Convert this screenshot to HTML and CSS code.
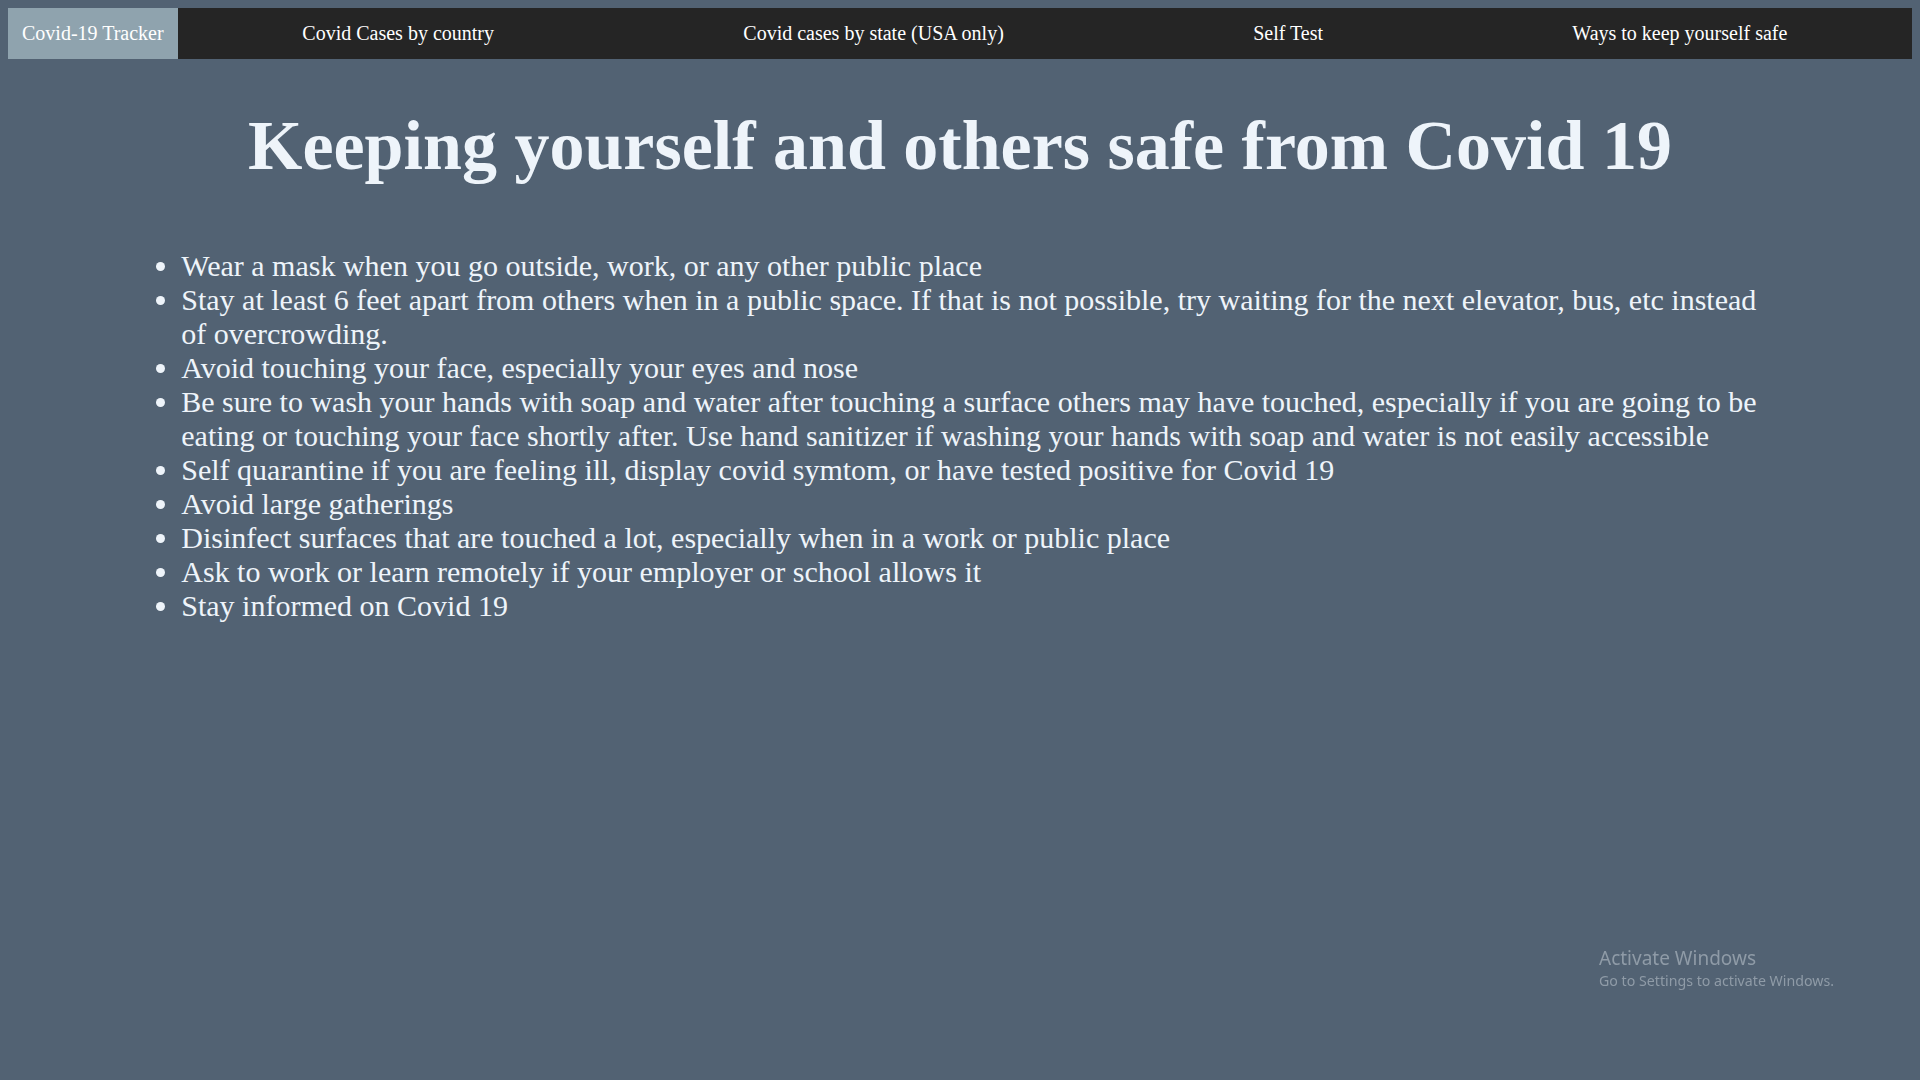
FILE: index.html
```html
<!DOCTYPE html>
<html lang="en">
<head>
<meta charset="utf-8">
<title>Ways to keep yourself safe</title>
<link rel="stylesheet" href="styles.css">
</head>
<body>
<nav class="topnav">
  <a class="brand" href="#">Covid-19 Tracker</a>
  <ul class="nav-links">
    <li><a href="#">Covid Cases by country</a></li>
    <li><a href="#">Covid cases by state (USA only)</a></li>
    <li><a href="#">Self Test</a></li>
    <li><a href="#">Ways to keep yourself safe</a></li>
  </ul>
</nav>
<h1 class="title">Keeping yourself and others safe from Covid 19</h1>
<ul class="tips">
  <li>Wear a mask when you go outside, work, or any other public place</li>
  <li>Stay at least 6 feet apart from others when in a public space. If that is not possible, try waiting for the next elevator, bus, etc instead of overcrowding.</li>
  <li>Avoid touching your face, especially your eyes and nose</li>
  <li>Be sure to wash your hands with soap and water after touching a surface others may have touched, especially if you are going to be eating or touching your face shortly after. Use hand sanitizer if washing your hands with soap and water is not easily accessible</li>
  <li>Self quarantine if you are feeling ill, display covid symtom, or have tested positive for Covid 19</li>
  <li>Avoid large gatherings</li>
  <li>Disinfect surfaces that are touched a lot, especially when in a work or public place</li>
  <li>Ask to work or learn remotely if your employer or school allows it</li>
  <li>Stay informed on Covid 19</li>
</ul>
<div class="watermark">
  <div class="wm-title">Activate Windows</div>
  <div class="wm-sub">Go to Settings to activate Windows.</div>
</div>
</body>
</html>
```
FILE: styles.css
```css
html {
  background: #526273;
}
body {
  margin: 8px;
  background: #526273;
  font-family: "Liberation Serif", "Times New Roman", serif;
  color: #eef4fa;
  min-height: 1064px;
}
.topnav {
  display: flex;
  align-items: stretch;
  background: #252525;
  height: 51px;
}
.brand {
  display: flex;
  align-items: center;
  padding: 0 14px;
  background: #8fa3ae;
  color: #ffffff;
  font-size: 20px;
  text-decoration: none;
}
.nav-links {
  flex: 1;
  display: flex;
  justify-content: space-around;
  align-items: center;
  list-style: none;
  margin: 0;
  padding: 0;
}
.nav-links a {
  color: #ffffff;
  font-size: 20px;
  text-decoration: none;
}
.title {
  font-size: 70px;
  font-weight: bold;
  text-align: center;
  margin: 47px 0 63px;
  color: #eef4fa;
}
.tips {
  margin: 0 7%;
  padding-left: 40px;
  font-size: 30px;
  color: #eef4fa;
}
.watermark {
  position: fixed;
  left: 1599px;
  top: 945px;
  font-family: "Noto Sans", "Open Sans", sans-serif;
  color: #8f9ba7;
}
.wm-title {
  font-size: 19px;
  line-height: 26px;
}
.wm-sub {
  font-size: 14.2px;
  line-height: 20px;
}
```
